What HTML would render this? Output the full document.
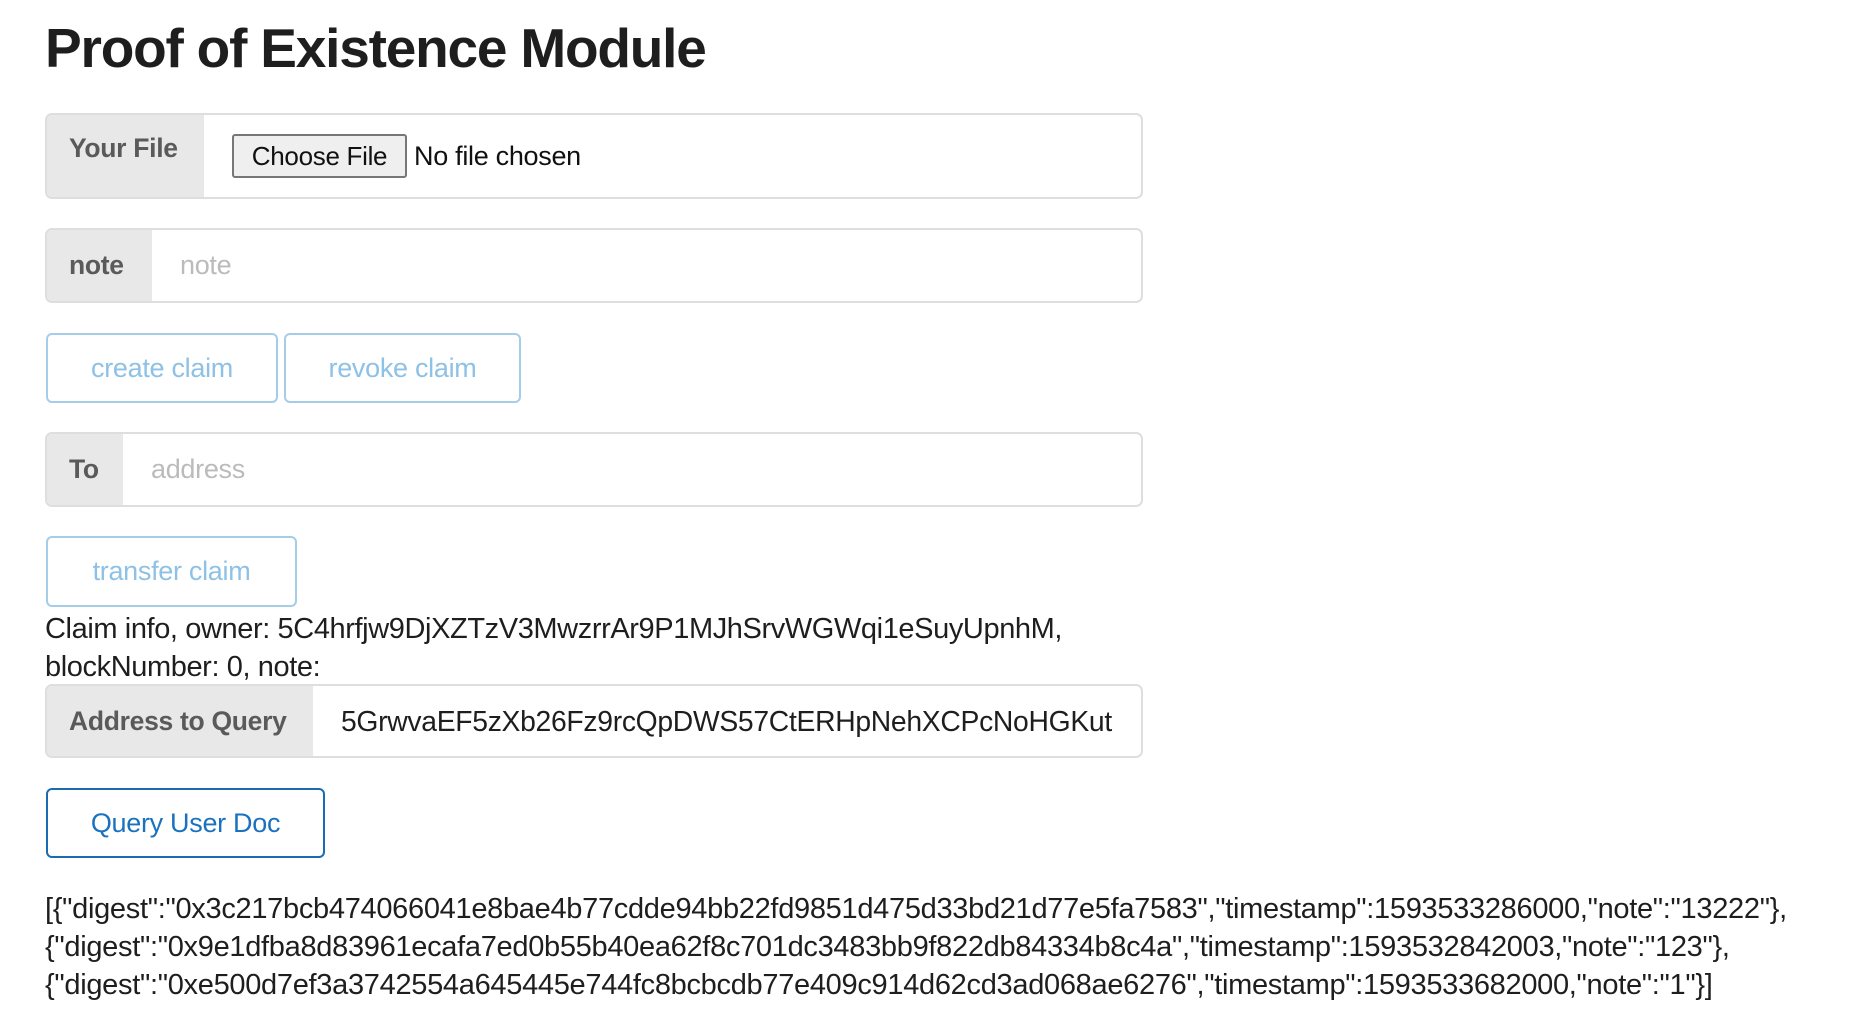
<!DOCTYPE html>
<html><head><meta charset="utf-8"><style>
body{margin:0;background:#fff;font-family:"Liberation Sans",sans-serif;color:#222;width:1864px;height:1030px;overflow:hidden;position:relative}
h1{position:absolute;left:45px;top:16px;margin:0;font-size:55px;font-weight:bold;letter-spacing:-1.2px;color:#1e1e1e;white-space:nowrap}
.row{position:absolute;left:45px;width:1098px;border:2px solid #dedede;border-radius:7px;display:flex;overflow:hidden;box-sizing:border-box}
.lab{background:#e8e8e8;color:#5a5a5a;font-weight:bold;font-size:26.5px;display:flex;align-items:center;padding-left:22px;box-sizing:border-box;letter-spacing:-0.3px;white-space:nowrap}
.inp{flex:1;display:flex;align-items:center;font-size:27px;padding-left:28px;color:#bbb;letter-spacing:-0.3px;white-space:nowrap}
.btn{position:absolute;border:2px solid #a5cdea;border-radius:6px;color:#8ec1e6;font-size:27px;display:flex;align-items:center;justify-content:center;box-sizing:border-box;letter-spacing:-0.3px}
.t{position:absolute;left:45px;font-size:29px;white-space:nowrap;color:#1e1e1e;letter-spacing:-0.4px}
.j{font-size:29px;letter-spacing:-0.3px}
</style></head><body>
<h1>Proof of Existence Module</h1>
<div class="row" style="top:113px;height:86px"><div class="lab" style="width:157px;align-items:flex-start;padding-top:18px">Your File</div>
<div class="inp" style="padding-left:28px;color:#111"><span style="border:2px solid #777;border-radius:3px;background:#efefef;height:44px;width:175px;display:inline-flex;align-items:center;justify-content:center;box-sizing:border-box;font-size:26px">Choose File</span><span style="margin-left:7px;font-size:27px">No file chosen</span></div></div>
<div class="row" style="top:228px;height:75px"><div class="lab" style="width:105px">note</div><div class="inp">note</div></div>
<div class="btn" style="left:46px;top:333px;width:232px;height:70px">create claim</div>
<div class="btn" style="left:284px;top:333px;width:237px;height:70px">revoke claim</div>
<div class="row" style="top:432px;height:75px"><div class="lab" style="width:76px">To</div><div class="inp">address</div></div>
<div class="btn" style="left:46px;top:536px;width:251px;height:71px">transfer claim</div>
<div class="t" style="top:613px">Claim info, owner: 5C4hrfjw9DjXZTzV3MwzrrAr9P1MJhSrvWGWqi1eSuyUpnhM,</div>
<div class="t" style="top:651px">blockNumber: 0, note:</div>
<div class="row" style="top:684px;height:74px"><div class="lab" style="width:266px">Address to Query</div><div class="inp" style="color:#1e1e1e;font-size:28.3px">5GrwvaEF5zXb26Fz9rcQpDWS57CtERHpNehXCPcNoHGKut</div></div>
<div class="btn" style="left:46px;top:788px;width:279px;height:70px;border-color:#1a6cb0;color:#1a72bf">Query User Doc</div>
<div class="t j" style="top:893px">[{"digest":"0x3c217bcb474066041e8bae4b77cdde94bb22fd9851d475d33bd21d77e5fa7583","timestamp":1593533286000,"note":"13222"},</div>
<div class="t j" style="top:931px">{"digest":"0x9e1dfba8d83961ecafa7ed0b55b40ea62f8c701dc3483bb9f822db84334b8c4a","timestamp":1593532842003,"note":"123"},</div>
<div class="t j" style="top:969px">{"digest":"0xe500d7ef3a3742554a645445e744fc8bcbcdb77e409c914d62cd3ad068ae6276","timestamp":1593533682000,"note":"1"}]</div>
</body></html>
